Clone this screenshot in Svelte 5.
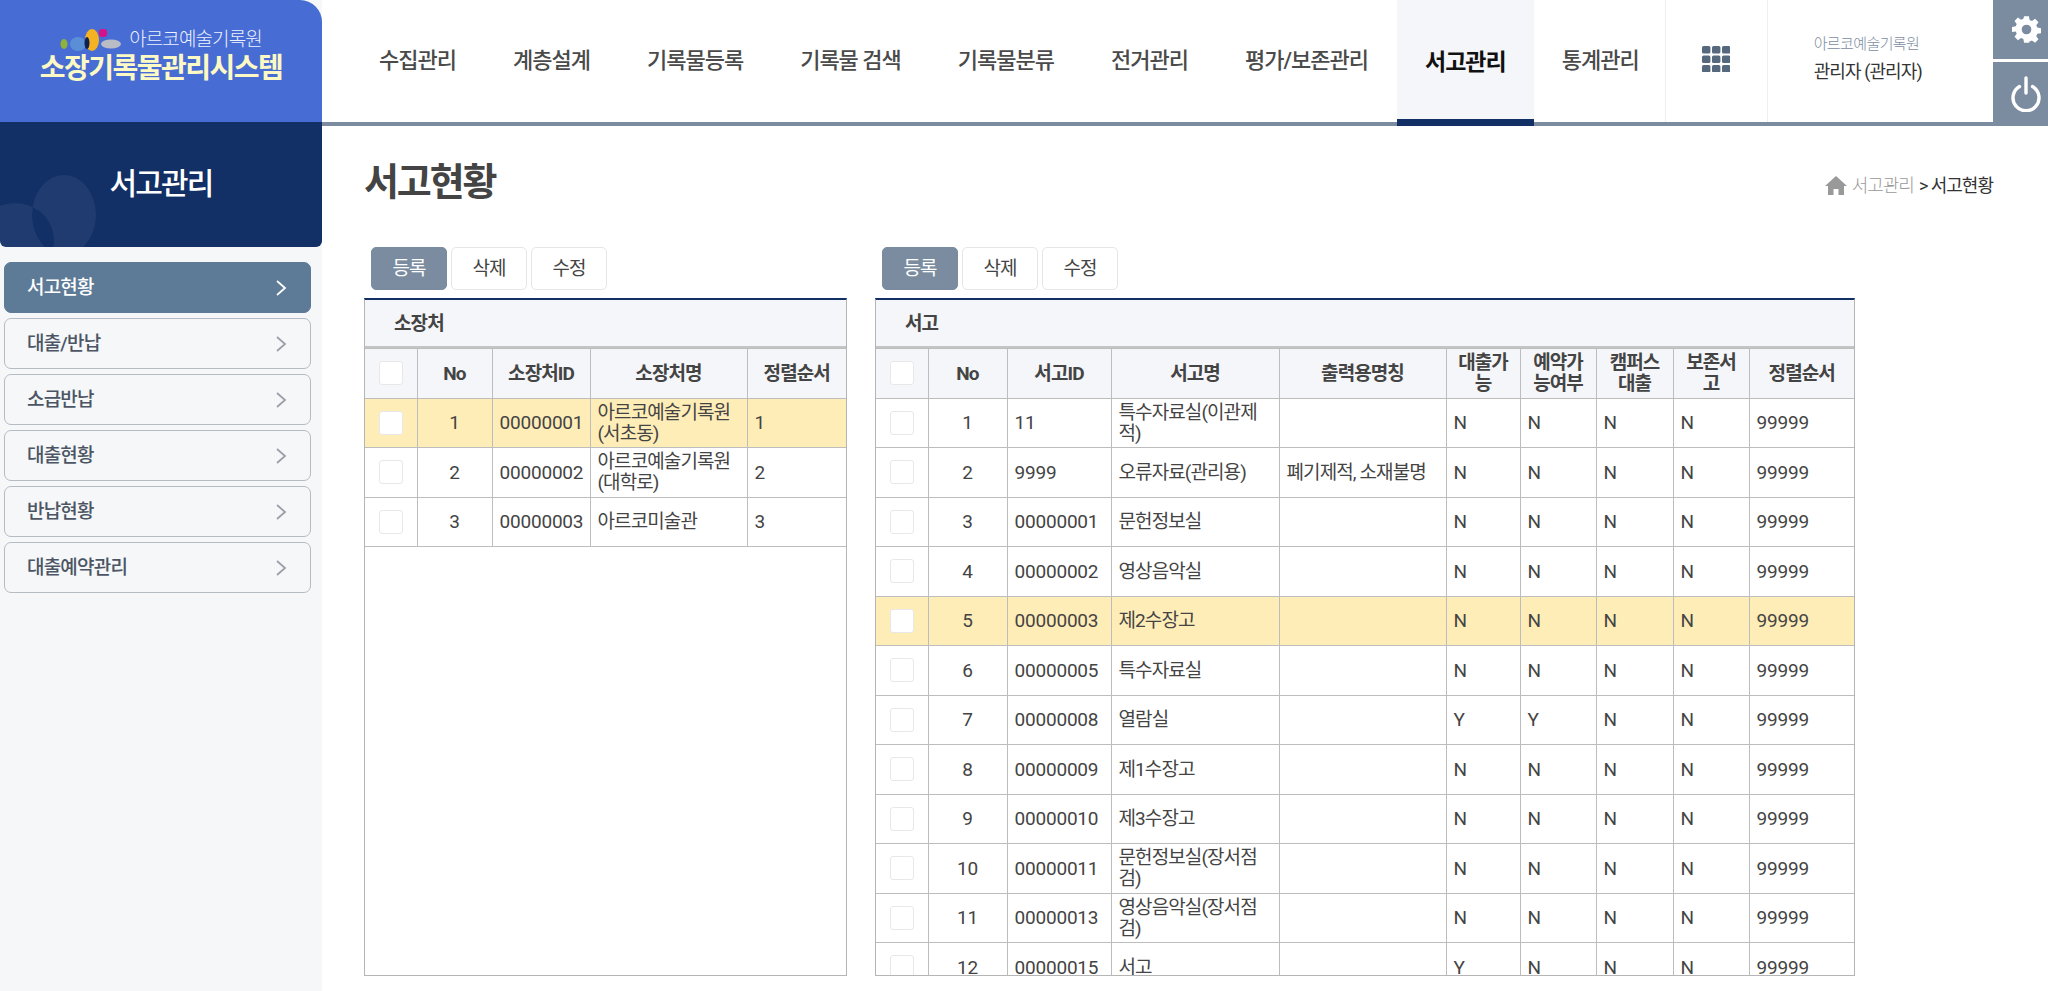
<script>
  const nav = ['수집관리','계층설계','기록물등록','기록물 검색','기록물분류','전거관리','평가/보존관리','서고관리','통계관리'];
  const menu = ['서고현황','대출/반납','소급반납','대출현황','반납현황','대출예약관리'];
  const left = [
    ['1','00000001','아르코예술기록원(서초동)','1',true],
    ['2','00000002','아르코예술기록원(대학로)','2',false],
    ['3','00000003','아르코미술관','3',false]
  ];
  const right = [
    ['1','11','특수자료실(이관제적)','','N','N','N','N'],
    ['2','9999','오류자료(관리용)','폐기제적, 소재불명','N','N','N','N'],
    ['3','00000001','문헌정보실','','N','N','N','N'],
    ['4','00000002','영상음악실','','N','N','N','N'],
    ['5','00000003','제2수장고','','N','N','N','N'],
    ['6','00000005','특수자료실','','N','N','N','N'],
    ['7','00000008','열람실','','Y','Y','N','N'],
    ['8','00000009','제1수장고','','N','N','N','N'],
    ['9','00000010','제3수장고','','N','N','N','N'],
    ['10','00000011','문헌정보실(장서점검)','','N','N','N','N'],
    ['11','00000013','영상음악실(장서점검)','','N','N','N','N'],
    ['12','00000015','서고','','Y','N','N','N']
  ];
</script>

<div class="page">
  <aside class="side">
    <div class="logo">
      <div class="logo-top">
        <svg width="62" height="23" viewBox="0 0 62 23" aria-hidden="true">
          <ellipse cx="4" cy="15" rx="3.5" ry="5" fill="#8fb23a"/>
          <ellipse cx="18" cy="15" rx="8" ry="7" fill="#5a8fd8"/>
          <ellipse cx="32" cy="11" rx="7" ry="11" fill="#f5b324"/>
          <ellipse cx="27" cy="14" rx="2.5" ry="6" fill="#10204f"/>
          <rect x="39" y="0" width="8" height="8" rx="3" fill="#d6128a"/>
          <ellipse cx="51" cy="15" rx="10" ry="4.5" fill="#b9bcc4"/>
        </svg>
        <span>아르코예술기록원</span>
      </div>
      <div class="logo-main">소장기록물관리시스템</div>
    </div>
    <div class="side-title">
      <svg class="deco" width="120" height="80" viewBox="0 0 120 80" aria-hidden="true">
        <defs><clipPath id="blob"><ellipse cx="64" cy="48" rx="32" ry="40"/></clipPath></defs>
        <ellipse cx="64" cy="48" rx="32" ry="40" fill="#ffffff" opacity=".06"/>
        <ellipse cx="15" cy="73" rx="39" ry="37" fill="#ffffff" opacity=".06"/>
        <ellipse cx="15" cy="73" rx="39" ry="37" fill="#122f66" clip-path="url(#blob)"/>
      </svg>
      <span>서고관리</span>
    </div>
    <ul class="menu">
      {#each menu as m, i}
        <li class:on={i === 0}>
          <span>{m}</span>
          <svg width="12" height="18" viewBox="0 0 12 18" aria-hidden="true"><path d="M2 2l8 7-8 7" fill="none" stroke="currentColor" stroke-width="1.8"/></svg>
        </li>
      {/each}
    </ul>
  </aside>

  <div class="main">
    <header class="top">
      <nav class="nav">
        {#each nav as n, i}
          <div class="nav-item" class:active={i === 7}>{n}</div>
        {/each}
      </nav>
      <div class="grid-btn">
        <svg width="28" height="26" viewBox="0 0 28 26" aria-hidden="true">
          {#each [0,1,2] as r}
            {#each [0,1,2] as c}
              <rect x={c * 10} y={r * 9.5} width="8.4" height="7.6" rx="1.6" fill="#56687d"/>
            {/each}
          {/each}
        </svg>
      </div>
      <div class="profile">
        <div class="org">아르코예술기록원</div>
        <div class="user">관리자 (관리자)</div>
      </div>
      <div class="actions">
        <div class="act">
          <svg width="29" height="29" viewBox="0 0 24 24" aria-hidden="true">
            <path fill="#fff" fill-rule="evenodd" d="M10 1h4l.6 3.1 1.9.8 2.6-1.8 2.8 2.8-1.8 2.6.8 1.9 3.1.6v4l-3.1.6-.8 1.9 1.8 2.6-2.8 2.8-2.6-1.8-1.9.8L14 23h-4l-.6-3.1-1.9-.8-2.6 1.8-2.8-2.8 1.8-2.6-.8-1.9L0 14v-4l3.1-.6.8-1.9-1.8-2.6 2.8-2.8 2.6 1.8 1.9-.8zM12 8a4 4 0 100 8 4 4 0 000-8z"/>
          </svg>
        </div>
        <div class="act">
          <svg width="32" height="36" viewBox="0 0 32 36" aria-hidden="true">
            <path d="M9.5 10.5a13 13 0 1 0 13 0" fill="none" stroke="#fff" stroke-width="3.4" stroke-linecap="round"/>
            <path d="M16 2v15" fill="none" stroke="#fff" stroke-width="3.4" stroke-linecap="round"/>
          </svg>
        </div>
      </div>
    </header>

    <div class="head">
      <h1>서고현황</h1>
      <div class="crumb">
        <svg width="22" height="20" viewBox="0 0 22 20" aria-hidden="true"><path fill="#999" d="M11 1L0 11h3v9h5.5v-6h5v6H19v-9h3z"/></svg>
        <span class="c1">서고관리</span><span class="c2">&gt; 서고현황</span>
      </div>
    </div>

    <div class="panels">
      <section class="col col-l">
        <div class="btns"><button class="primary">등록</button><button>삭제</button><button>수정</button></div>
        <div class="panel">
          <div class="ptitle">소장처</div>
          <table class="tl">
            <colgroup><col class="l1"/><col class="l2"/><col class="l3"/><col class="l4"/><col/></colgroup>
            <thead><tr><th><i class="cb"></i></th><th>No</th><th>소장처ID</th><th>소장처명</th><th>정렬순서</th></tr></thead>
            <tbody>
              {#each left as r}
                <tr class:sel={r[4]}>
                  <td class="c"><i class="cb"></i></td>
                  <td class="c n">{r[0]}</td><td class="n">{r[1]}</td><td>{r[2]}</td><td class="n">{r[3]}</td>
                </tr>
              {/each}
            </tbody>
          </table>
        </div>
      </section>

      <section class="col col-r">
        <div class="btns"><button class="primary">등록</button><button>삭제</button><button>수정</button></div>
        <div class="panel">
          <div class="ptitle">서고</div>
          <table class="tr">
            <colgroup><col class="r1"/><col class="r2"/><col class="r3"/><col class="r4"/><col class="r5"/><col class="r6"/><col class="r7"/><col class="r8"/><col class="r9"/><col/></colgroup>
            <thead><tr><th><i class="cb"></i></th><th>No</th><th>서고ID</th><th>서고명</th><th>출력용명칭</th><th>대출가능</th><th>예약가능여부</th><th>캠퍼스대출</th><th>보존서고</th><th>정렬순서</th></tr></thead>
            <tbody>
              {#each right as r, i}
                <tr class:sel={i === 4}>
                  <td class="c"><i class="cb"></i></td>
                  <td class="c n">{r[0]}</td><td class="n">{r[1]}</td><td>{r[2]}</td><td>{r[3]}</td>
                  <td class="n">{r[4]}</td><td class="n">{r[5]}</td><td class="n">{r[6]}</td><td class="n">{r[7]}</td><td class="n">99999</td>
                </tr>
              {/each}
            </tbody>
          </table>
        </div>
      </section>
    </div>
  </div>
</div>

<style>
  :global(body) { margin: 0; overflow: hidden; background: #fff; }
  .page {
    display: flex; width: 2048px; height: 991px; overflow: hidden;
    font-family: Roboto, "Noto Sans CJK KR", sans-serif; color: #444;
  }
  .side { width: 322px; flex: none; background: #f5f7f9; display: flex; flex-direction: column; }
  .logo {
    height: 122px; background: #476cd4; border-top-right-radius: 22px;
    display: flex; flex-direction: column; align-items: center; padding-top: 27px; box-sizing: border-box;
  }
  .logo-top { display: flex; align-items: center; gap: 7px; color: #eef2ff; font-size: 19px; font-weight: 300; letter-spacing: -.9px; line-height: 26px; }
  .logo-main { color: #fdf9c4; font-size: 28px; font-weight: 700; letter-spacing: -1.5px; line-height: 30px; margin-top: 1px; }
  .side-title {
    height: 125px; background: #122f66; border-radius: 0 0 6px 6px; position: relative; overflow: hidden;
    display: flex; align-items: center; justify-content: center; color: #fff;
    font-size: 30px; font-weight: 500; letter-spacing: -1.8px; padding-bottom: 8px; box-sizing: border-box;
  }
  .deco { position: absolute; left: 0; bottom: 0; }
  .side-title span { position: relative; }
  .menu { list-style: none; margin: 15px 0 0; padding: 0 11px 0 4px; display: flex; flex-direction: column; gap: 5px; }
  .menu li {
    height: 51px; box-sizing: border-box; border: 1px solid #b6bcc3; border-radius: 7px;
    display: flex; align-items: center; justify-content: space-between; padding: 0 23px 0 22px;
    font-size: 19px; font-weight: 500; letter-spacing: -.8px; color: #4b5563;
  }
  .menu li span { margin-top: -4px; }
  .menu li svg { color: #9aa0a7; }
  .menu li.on { background: #5d7a96; border-color: #5d7a96; color: #fff; }
  .menu li.on svg { color: #fff; }

  .main { flex: 1; min-width: 0; display: flex; flex-direction: column; }
  .top { height: 126px; flex: none; box-sizing: border-box; border-bottom: 4px solid #7b8ca0; display: flex; background: #fff; }
  .nav { display: flex; padding-left: 29px; }
  .nav-item {
    padding: 0 29px 6px 28px; display: flex; align-items: center; white-space: nowrap;
    font-size: 22px; font-weight: 500; letter-spacing: -1px; color: #4a4a4a;
  }
  .nav-item.active {
    background: #f4f6f9; color: #111; font-weight: 700; font-size: 23px;
    height: 126px; box-sizing: border-box; border-bottom: 7px solid #122f66; padding: 0 28px 0;
  }
  .grid-btn { width: 101px; margin-left: -3px; flex: none; border-left: 1px solid #eceef0; border-right: 1px solid #eceef0; display: flex; align-items: center; justify-content: center; padding-bottom: 4px; box-sizing: content-box; }
  .profile { flex: 1; padding: 32px 0 0 46px; }
  .org { font-size: 15px; letter-spacing: -.6px; color: #7b8ca0; line-height: 24px; font-weight: 300; }
  .user { font-size: 18px; letter-spacing: -.9px; color: #333; line-height: 32px; }
  .actions { width: 55px; flex: none; display: flex; flex-direction: column; gap: 3px; height: 126px; }
  .act { background: #7b8ca0; display: flex; align-items: center; justify-content: center; padding-left: 11px; }
  .act:first-child { height: 59px; }
  .act:last-child { height: 64px; }

  .head { display: flex; align-items: center; justify-content: space-between; padding: 27px 55px 0 42px; height: 88px; box-sizing: border-box; flex: none; }
  h1 { margin: 0; font-size: 38px; font-weight: 700; letter-spacing: -2.1px; color: #444; line-height: 54px; margin-top: -4px;}
  .crumb { display: flex; align-items: center; font-size: 18px; letter-spacing: -1px; margin-top: 0; gap: 5px; }
  .crumb svg { margin-top: 2px; }
  .c1 { color: #999; font-weight: 300; }
  .c2 { color: #333; }

  .panels { display: flex; gap: 28px; padding: 33px 0 0 42px; }
  .col { display: flex; flex-direction: column; }
  .col-l { width: 483px; }
  .col-r { width: 980px; }
  .btns { display: flex; gap: 4px; padding-left: 7px; height: 43px; margin-bottom: 8px; }
  button {
    width: 76px; height: 43px; box-sizing: border-box; background: #fff; border: 1px solid #e6e6e6; border-radius: 5px;
    font: 400 19px Roboto, "Noto Sans CJK KR", sans-serif; letter-spacing: -1px; color: #444; padding: 0 0 5px;
  }
  button.primary { background: #7b8ca0; border-color: #7b8ca0; color: #fff; }
  .panel { height: 678px; box-sizing: border-box; border: 1px solid #b5b5b5; border-top: 2px solid #122f66; overflow: hidden; }
  .ptitle { height: 48px; box-sizing: border-box; background: #f4f6f9; border-bottom: 2px solid #c4c4c4; padding: 0 29px 4px; display: flex; align-items: center; font-size: 19px; font-weight: 700; letter-spacing: -.9px; color: #444; }
  table { border-collapse: collapse; table-layout: fixed; width: 100%; font-size: 19px; letter-spacing: -.9px; line-height: 21px; }
  tr { height: 49.5px; }
  th, td { border: 1px solid #bdbdbd; padding: 0 7px; box-sizing: border-box; }
  th:first-child, td:first-child { border-left: 0; }
  th:last-child, td:last-child { border-right: 0; }
  tr:last-child td { border-bottom: 1px solid #bdbdbd; }
  th { background: #f4f6f9; font-weight: 700; color: #444; text-align: center; padding: 0 6px; }
  td { color: #444; font-weight: 400; }
  td.n { letter-spacing: -.2px; }
  td.c { text-align: center; }
  tr.sel td { background: #ffedb8; }
  .cb { display: block; width: 24px; height: 24px; margin: 0 auto; background: #fff; border: 1px solid #e8e8e8; border-radius: 3px; box-sizing: border-box; }
  .l1 { width: 52px; } .l2 { width: 75px; } .l3 { width: 98px; } .l4 { width: 157px; }
  .r1 { width: 52px; } .r2 { width: 79px; } .r3 { width: 104px; } .r4 { width: 168px; } .r5 { width: 167px; }
  .r6 { width: 74px; } .r7 { width: 76px; } .r8 { width: 77px; } .r9 { width: 76px; }
</style>
